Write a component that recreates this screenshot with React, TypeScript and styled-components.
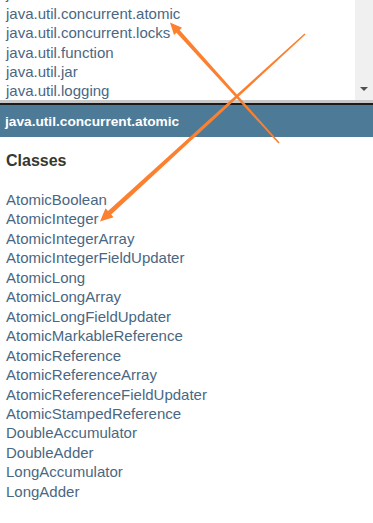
import React from "react";
import styled, { createGlobalStyle } from "styled-components";

const packages = [
  "java.util.concurrent",
  "java.util.concurrent.atomic",
  "java.util.concurrent.locks",
  "java.util.function",
  "java.util.jar",
  "java.util.logging",
];

const classes = [
  "AtomicBoolean",
  "AtomicInteger",
  "AtomicIntegerArray",
  "AtomicIntegerFieldUpdater",
  "AtomicLong",
  "AtomicLongArray",
  "AtomicLongFieldUpdater",
  "AtomicMarkableReference",
  "AtomicReference",
  "AtomicReferenceArray",
  "AtomicReferenceFieldUpdater",
  "AtomicStampedReference",
  "DoubleAccumulator",
  "DoubleAdder",
  "LongAccumulator",
  "LongAdder",
];

type Pt = [number, number];

// tapered annotation arrow: thin at the tail, thick at the head
const arrowPoints = (
  tail: Pt,
  tip: Pt,
  tailW: number,
  shaftW: number,
  headLen: number,
  headHalf: number
) => {
  const dx = tip[0] - tail[0];
  const dy = tip[1] - tail[1];
  const len = Math.hypot(dx, dy);
  const ux = dx / len;
  const uy = dy / len;
  const nx = -uy;
  const ny = ux;
  const bx = tip[0] - ux * headLen;
  const by = tip[1] - uy * headLen;
  const pts: Pt[] = [
    [tail[0] + (nx * tailW) / 2, tail[1] + (ny * tailW) / 2],
    [bx + (nx * shaftW) / 2, by + (ny * shaftW) / 2],
    [bx + nx * headHalf, by + ny * headHalf],
    tip,
    [bx - nx * headHalf, by - ny * headHalf],
    [bx - (nx * shaftW) / 2, by - (ny * shaftW) / 2],
    [tail[0] - (nx * tailW) / 2, tail[1] - (ny * tailW) / 2],
  ];
  return pts.map((p) => p.map((v) => v.toFixed(1)).join(",")).join(" ");
};

export default function App() {
  return (
    <>
      <GlobalStyle />
      <Page>
        <PackageFrame>
          <PackageList>
            <PackageScroll>
              {packages.map((p) => (
                <PackageLink key={p}>{p}</PackageLink>
              ))}
            </PackageScroll>
          </PackageList>
          <ScrollBar>
            <DownArrow />
          </ScrollBar>
        </PackageFrame>
        <FrameEdge />
        <Header>java.util.concurrent.atomic</Header>
        <ClassPanel>
          <Title>Classes</Title>
          <ClassList>
            {classes.map((c) => (
              <ClassLink key={c}>{c}</ClassLink>
            ))}
          </ClassList>
        </ClassPanel>
        <Overlay width="373" height="523" viewBox="0 0 373 523">
          <polygon
            points={arrowPoints([279, 143], [170, 22.5], 1.6, 4.2, 12, 5.5)}
            fill="#fb8130"
          />
          <polygon
            points={arrowPoints([305, 34], [100, 221.5], 1.6, 4.8, 13, 6)}
            fill="#fb8130"
          />
        </Overlay>
      </Page>
    </>
  );
}

const GlobalStyle = createGlobalStyle`
  body {
    margin: 0;
    background: #fff;
    font-family: Arial, "Liberation Sans", sans-serif;
  }
`;

const Page = styled.div`
  position: relative;
  width: 373px;
  height: 523px;
  overflow: hidden;
  background: #fff;
`;

const PackageFrame = styled.div`
  display: flex;
  height: 100px;
  border-bottom: 3px solid #c8c8c8;
`;

const PackageList = styled.div`
  flex: 1;
  overflow: hidden;
  padding-left: 6px;
`;

const PackageScroll = styled.div`
  margin-top: -15.6px;
`;

const PackageLink = styled.div`
  font-size: 15px;
  line-height: 19.4px;
  color: #4a6782;
  white-space: nowrap;
`;

const ScrollBar = styled.div`
  width: 18px;
  background: #f0f0f0;
  display: flex;
  flex-direction: column;
  justify-content: flex-end;
  align-items: center;
  padding-bottom: 9px;
  box-sizing: border-box;
`;

const DownArrow = styled.div`
  width: 0;
  height: 0;
  border-left: 4px solid transparent;
  border-right: 4px solid transparent;
  border-top: 4px solid #505050;
`;

const FrameEdge = styled.div`
  height: 2px;
  background: #1c1c1c;
`;

const Header = styled.div`
  height: 32px;
  background: #4d7a97;
  color: #fff;
  font-weight: bold;
  font-size: 13.7px;
  line-height: 30px;
  padding-left: 5px;
  padding-top: 2px;
  box-sizing: border-box;
  white-space: nowrap;
`;

const ClassPanel = styled.div`
  padding: 14px 0 0 6px;
`;

const Title = styled.div`
  font-weight: bold;
  font-size: 16px;
  line-height: 20px;
  color: #353833;
  margin-bottom: 19px;
`;

const ClassList = styled.div`
  display: flex;
  flex-direction: column;
`;

const ClassLink = styled.div`
  font-size: 15px;
  line-height: 19.45px;
  color: #4a6782;
  white-space: nowrap;
`;

const Overlay = styled.svg`
  position: absolute;
  left: 0;
  top: 0;
  pointer-events: none;
`;
